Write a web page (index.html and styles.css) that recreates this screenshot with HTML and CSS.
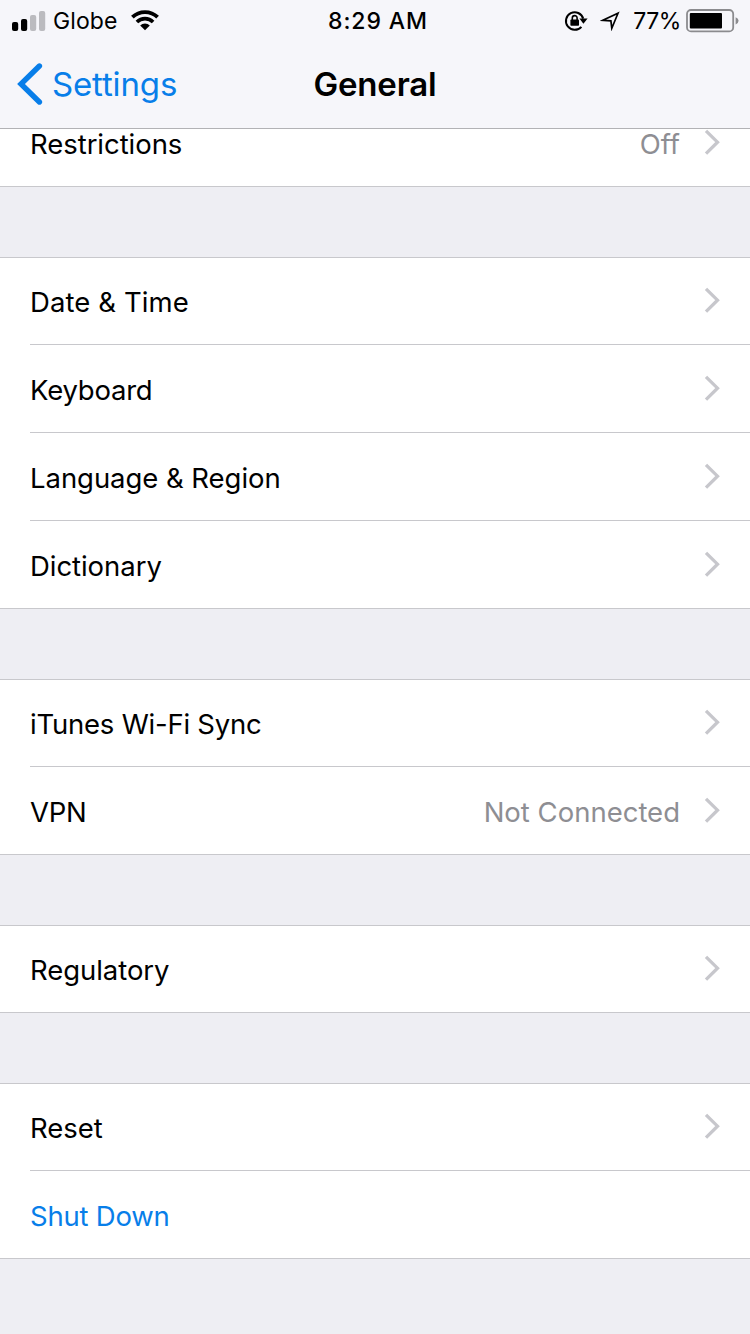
FILE: index.html
```html
<!DOCTYPE html>
<html lang="en">
<head>
  <meta charset="UTF-8">
  <meta name="viewport" content="width=device-width, initial-scale=1.0">
  <title>General</title>
  <link rel="stylesheet" href="styles.css">
</head>
<body>
  <svg class="sprite" width="0" height="0">
    <symbol id="chevron" viewBox="0 0 18 28">
      <path d="M3 2.8 L14.5 14.2 L3 25.6" fill="none" stroke="#c7c7cc" stroke-width="3.3"/>
    </symbol>
  </svg>

  <header class="top">
    <div class="status-bar">
      <div class="status-left">
        <svg class="signal" width="34" height="20" viewBox="0 0 34 20">
          <rect x="0" y="11" width="6.2" height="9" rx="2"/>
          <rect x="9" y="8" width="6.2" height="12" rx="2"/>
          <rect x="18" y="4" width="6.2" height="16" rx="2" fill="#bbbbbf"/>
          <rect x="27" y="0" width="6.2" height="20" rx="2" fill="#bbbbbf"/>
        </svg>
        <span class="carrier">Globe</span>
        <svg class="wifi" width="28" height="21" viewBox="0 0 28 21">
          <path d="M1.4 7.2 A18 18 0 0 1 26.6 7.2" fill="none" stroke="#000" stroke-width="3.8"/>
          <path d="M5.9 12 A11.4 11.4 0 0 1 22.1 12" fill="none" stroke="#000" stroke-width="3.6"/>
          <path d="M14 20.2 L9.2 15.4 A6.8 6.8 0 0 1 18.8 15.4 Z"/>
        </svg>
      </div>
      <div class="clock">8:29 AM</div>
      <div class="status-right">
        <svg class="lock" width="24" height="22" viewBox="0 0 24 22">
          <path d="M17.4 16.8 A8.8 8.8 0 1 1 19.2 8.6" fill="none" stroke="#000" stroke-width="2"/>
          <path d="M15.4 8.6 H23.6 L19.4 13.8 Z"/>
          <rect x="6.4" y="9.6" width="8.6" height="6.2" rx="0.8"/>
          <path d="M8.3 10.2 V8 A2.4 2.4 0 0 1 13.1 8 V10.2" fill="none" stroke="#000" stroke-width="1.6"/>
        </svg>
        <svg class="location" width="20" height="20" viewBox="0 0 20 20">
          <path d="M2.8 9.3 L18 2.2 L11.8 17.2 L10.9 9.8 Z" fill="none" stroke="#000" stroke-width="1.7" stroke-linejoin="miter" stroke-miterlimit="6"/>
        </svg>
        <span class="percent">77%</span>
        <svg class="battery" width="54" height="24" viewBox="0 0 54 24">
          <rect x="1" y="1" width="46.2" height="21.4" rx="4" fill="none" stroke="#8b8b8e" stroke-width="1.8"/>
          <rect x="3.8" y="4" width="32.2" height="15.4" rx="1"/>
          <path d="M49.6 8.2 Q52.6 9.4 52.6 11.8 Q52.6 14.2 49.6 15.4 Z" fill="#8b8b8e"/>
        </svg>
      </div>
    </div>
    <nav class="nav-bar">
      <a href="#" class="back">
        <svg width="26" height="44" viewBox="0 0 26 44">
          <path d="M22.4 4 L4 22 L22.4 40" fill="none" stroke="#087ee9" stroke-width="5.4" stroke-linecap="round"/>
        </svg>
        <span>Settings</span>
      </a>
      <h1>General</h1>
    </nav>
  </header>

  <main class="settings">
    <section class="group cut">
      <div class="row">
        <span class="label">Restrictions</span>
        <span class="value">Off</span>
        <svg class="chevron"><use href="#chevron"/></svg>
      </div>
    </section>

    <section class="group">
      <div class="row">
        <span class="label wide">Date &amp; Time</span>
        <svg class="chevron"><use href="#chevron"/></svg>
      </div>
      <div class="row">
        <span class="label tight">Keyboard</span>
        <svg class="chevron"><use href="#chevron"/></svg>
      </div>
      <div class="row">
        <span class="label">Language &amp; Region</span>
        <svg class="chevron"><use href="#chevron"/></svg>
      </div>
      <div class="row">
        <span class="label">Dictionary</span>
        <svg class="chevron"><use href="#chevron"/></svg>
      </div>
    </section>

    <section class="group">
      <div class="row">
        <span class="label tight">iTunes Wi-Fi Sync</span>
        <svg class="chevron"><use href="#chevron"/></svg>
      </div>
      <div class="row">
        <span class="label tight">VPN</span>
        <span class="value">Not Connected</span>
        <svg class="chevron"><use href="#chevron"/></svg>
      </div>
    </section>

    <section class="group">
      <div class="row">
        <span class="label">Regulatory</span>
        <svg class="chevron"><use href="#chevron"/></svg>
      </div>
    </section>

    <section class="group">
      <div class="row">
        <span class="label">Reset</span>
        <svg class="chevron"><use href="#chevron"/></svg>
      </div>
      <div class="row">
        <a href="#" class="label tight action">Shut Down</a>
      </div>
    </section>
  </main>
</body>
</html>
```
FILE: styles.css
```css
* {
  margin: 0;
  padding: 0;
  box-sizing: border-box;
}

body {
  height: 1334px;
  overflow: hidden;
  display: flex;
  flex-direction: column;
  background-color: #eeeef3;
  font-family: Inter, "Liberation Sans", sans-serif;
  color: #000;
}

.sprite {
  display: none;
}

svg {
  display: block;
  flex: none;
}

a {
  text-decoration: none;
}

/* Header */
.top {
  flex: none;
  height: 129px;
  background-color: #f6f6fa;
  border-bottom: 1px solid #b2b2b5;
}

.status-bar {
  height: 40px;
  display: grid;
  grid-template-columns: 1fr auto 1fr;
  align-items: center;
  padding: 0 10px 0 12px;
  font-size: 23px;
  line-height: 40px;
}

.status-left,
.status-right {
  display: flex;
  align-items: center;
}

.status-right {
  justify-content: flex-end;
}

.carrier {
  margin: 1px 13px 0 7px;
  letter-spacing: 0.1px;
}

.clock {
  font-weight: 500;
  padding: 1px 0 0 4px;
  letter-spacing: 0.9px;
}

.location {
  margin-left: 12px;
}

.percent {
  margin: 1px 5px 0 13px;
  letter-spacing: -0.4px;
}

.nav-bar {
  height: 88px;
  display: grid;
  grid-template-columns: 1fr auto 1fr;
  align-items: center;
  padding: 0 16px;
  line-height: 88px;
}

.back {
  display: flex;
  align-items: center;
  gap: 9px;
  padding-left: 1px;
  color: #087ee9;
  font-size: 33px;
  letter-spacing: -0.15px;
}

.nav-bar h1 {
  font-size: 33px;
  font-weight: 600;
  letter-spacing: -0.2px;
}

/* Settings list */
.settings {
  flex: 1;
  display: flex;
  flex-direction: column;
  gap: 70px;
}

.group {
  flex: none;
  background-color: #fff;
  border-top: 1px solid #c8c8cc;
  border-bottom: 1px solid #c8c8cc;
  padding-left: 30px;
}

.row {
  height: 88px;
  display: flex;
  align-items: flex-end;
  padding-right: 28px;
  border-bottom: 1px solid #c8c8cc;
}

.row:first-child {
  height: 87px;
}

.row:last-child {
  height: 87px;
  border-bottom: none;
}

.row:only-child {
  height: 86px;
}

/* first group starts right under the header */
.group.cut {
  border-top: none;
}

.group.cut .row {
  height: 57px;
}

.label,
.value {
  font-size: 27.5px;
  line-height: 28px;
  padding-bottom: 28px;
}

.label {
  flex: 1;
  letter-spacing: -0.05px;
}

.label.tight {
  letter-spacing: -0.22px;
}

.label.wide {
  letter-spacing: 0.1px;
}

.value {
  color: #8e8e93;
}

.action {
  color: #087ee9;
}

.chevron {
  width: 18px;
  height: 28px;
  margin: 0 1px 30px 23px;
}
```
